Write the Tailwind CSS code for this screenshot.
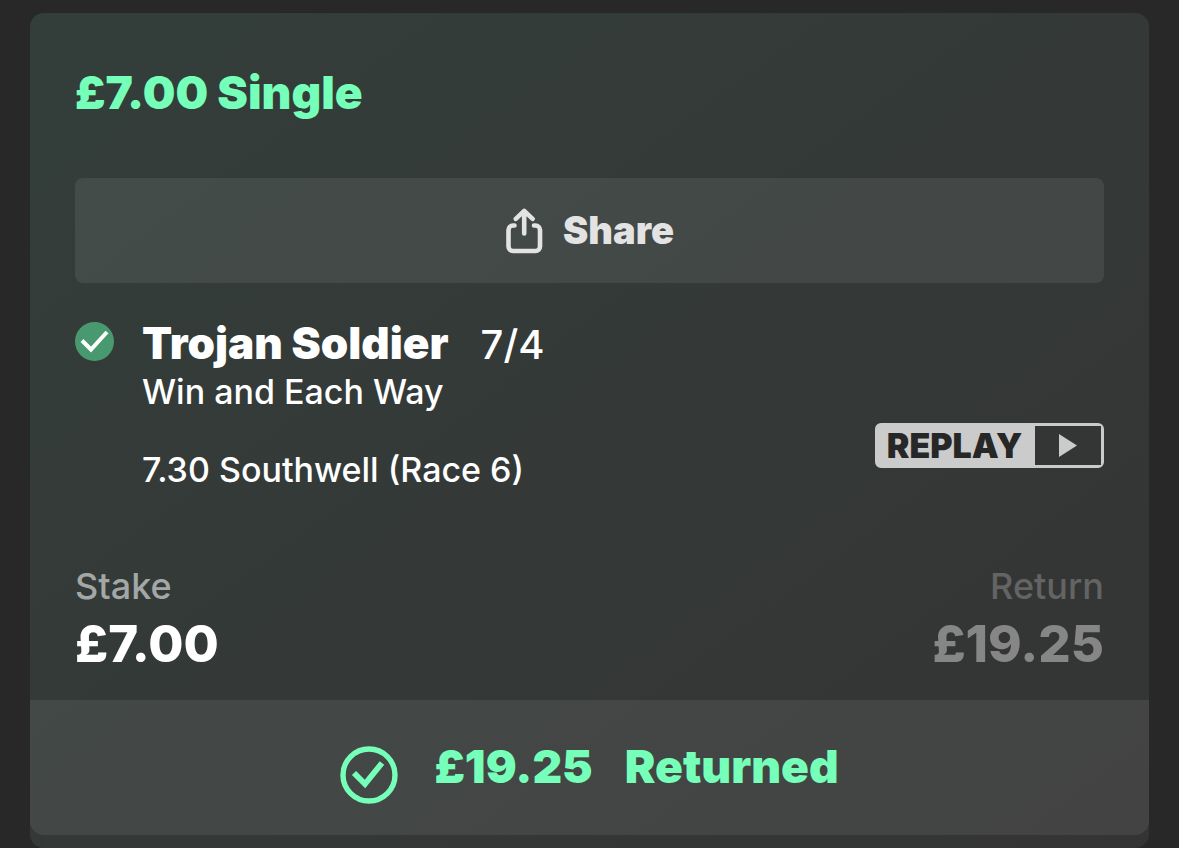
<!DOCTYPE html>
<html lang="en">
<head>
    <meta charset="utf-8"/>
    <meta content="width=device-width, initial-scale=1.0" name="viewport"/>
    <title>Settled Bet</title>
    <script src="https://cdn.jsdelivr.net/npm/@tailwindcss/browser@4"></script>
</head>
<body class="bg-[#282828] font-['Inter','Liberation_Sans',sans-serif] text-white">

    <main class="px-[30px] pt-[13px]">
        <article class="rounded-[14px] bg-linear-to-br from-[#333e3a] via-[#343937] to-[#343434] pb-[13px]">

            <!-- Bet details -->
            <div class="px-[45px] pt-[51px] pb-[22px]">
                <h1 class="text-[46px] leading-[56px] font-black text-[#75ffb9]">£7.00 Single</h1>

                <button type="button" class="mt-[58px] flex h-[105px] w-full items-center justify-center gap-5 rounded-lg bg-white/8 text-[38px] font-black text-[#e3e3e3]">
                    <svg class="h-[46px] w-[38px]" viewBox="0 0 38 46" fill="none" stroke="currentColor" stroke-width="4.6" stroke-linecap="round" stroke-linejoin="round" aria-hidden="true">
                        <path d="M9.500 17.500H8a4.500 4.500 0 0 0-4.500 4.500V38.500a4.500 4.500 0 0 0 4.500 4.500H30.500a4.500 4.500 0 0 0 4.500-4.500V22a4.500 4.500 0 0 0-4.500-4.500H29"/>
                        <path d="M19.200 25.500V3M10.800 10.800L19.200 2.800L27.600 10.800"/>
                    </svg>
                    Share
                </button>

                <!-- Selection -->
                <section class="mt-9 flex gap-[27px]">
                    <svg class="mt-[3px] size-10 shrink-0" viewBox="0 0 40 40" fill="none" role="img" aria-label="Won">
                        <circle cx="19.500" cy="19.500" r="19.500" fill="#48996f"/>
                        <path d="M7 18.500L16 27.500L32 10" stroke="#fff" stroke-width="4"/>
                    </svg>
                    <div class="flex-1">
                        <div class="flex items-baseline gap-8 leading-[48px]">
                            <h2 class="text-[44px] font-black">Trojan Soldier</h2>
                            <span class="text-[40px] font-medium">7/4</span>
                        </div>
                        <p class="text-[34px] leading-[46px] font-medium">Win and Each Way</p>
                        <p class="mt-8 text-[34px] leading-[46px] font-medium">7.30 Southwell (Race 6)</p>
                    </div>
                    <button type="button" class="mt-[104px] flex h-[45px] w-[229px] self-start rounded-md border-3 border-[#cbcbcb] bg-[#cbcbcb]">
                        <span class="flex h-full flex-1 items-center justify-center pr-1 text-[34px] leading-none font-black text-[#272727]">REPLAY</span>
                        <span class="flex h-full w-[66px] items-center justify-center bg-[#343636] text-[#cbcbcb]">
                            <svg class="h-[23px] w-[18px]" viewBox="0 0 18 23" fill="currentColor" aria-hidden="true">
                                <path d="M0 0L18 11.500L0 23Z"/>
                            </svg>
                        </span>
                    </button>
                </section>

                <!-- Stake / return -->
                <dl class="mt-[69px] flex justify-between">
                    <div>
                        <dt class="text-[36px] leading-[48px] font-medium text-[#a3a7a5]">Stake</dt>
                        <dd class="text-[51px] leading-[68px] font-extrabold">£7.00</dd>
                    </div>
                    <div class="text-right">
                        <dt class="text-[36px] leading-[48px] font-medium text-[#636463]">Return</dt>
                        <dd class="text-[51px] leading-[68px] font-extrabold text-[#868686]">£19.25</dd>
                    </div>
                </dl>
            </div>

            <!-- Result bar -->
            <footer class="flex h-[135px] items-center justify-center gap-9 rounded-b-[14px] bg-white/8 pb-[2px] text-[46px] font-black text-[#75ffb9]">
                <svg class="mt-4 size-[58px]" viewBox="0 0 58 58" fill="none" stroke="currentColor" aria-hidden="true">
                    <circle cx="29" cy="29" r="26" stroke-width="5.400"/>
                    <path d="M14 27L25 38L42 17" stroke-width="5.800"/>
                </svg>
                <p class="flex gap-8">
                    <span>£19.25</span>
                    <span>Returned</span>
                </p>
            </footer>
        </article>
    </main>

</body>
</html>
